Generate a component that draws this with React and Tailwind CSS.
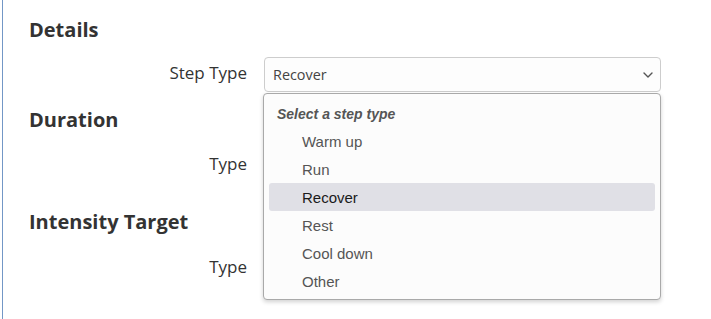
import { useState } from 'react'

const STEP_TYPES = ['Warm up', 'Run', 'Recover', 'Rest', 'Cool down', 'Other']

function Chevron() {
  return (
    <svg width="10" height="6" viewBox="0 0 10 6" className="absolute right-[7px] top-1/2 -translate-y-1/2">
      <path d="M1 1l4 4 4-4" fill="none" stroke="#555" strokeWidth="1.4" strokeLinecap="round" strokeLinejoin="round" />
    </svg>
  )
}

function SelectBox({ value, children }) {
  return (
    <div className="relative w-[397px]">
      <div className="relative h-[35px] rounded-[4px] border border-[#cdcdcd] bg-[#fdfdfd] pl-[8px] flex items-center text-[14.4px] leading-5 text-[#444]">
        {value}
        <Chevron />
      </div>
      {children}
    </div>
  )
}

function Row({ label, value, className = '', children }) {
  return (
    <div className={`flex items-start ${className}`}>
      <div className="w-[218px] text-right text-[17px] leading-6 text-[#333] mt-[4px]">{label}</div>
      <div className="ml-[17px]">
        <SelectBox value={value}>{children}</SelectBox>
      </div>
    </div>
  )
}

function Heading({ children, className = '' }) {
  return <h2 className={`text-[20px] leading-7 font-bold text-[#333] ${className}`}>{children}</h2>
}

function StepMenu({ selected }) {
  return (
    <div className="absolute left-[-1px] right-0 top-[calc(100%+1px)] z-10 rounded-[4px] border border-[#a9a9a9] bg-[#fcfcfc] pt-[5px] pb-[4px] px-[5px] shadow-[0_2px_4px_rgba(0,0,0,0.18)] font-['Liberation_Sans',Arial,sans-serif]">
      <div className="h-7 leading-7 pt-[1px] pl-[8px] text-[14px] font-bold italic text-[#555]">Select a step type</div>
      {STEP_TYPES.map(t => (
        <div
          key={t}
          className={`h-7 leading-7 pt-[1px] pl-[33px] text-[15px] rounded-[3px] ${t === selected ? 'bg-[#e0e0e6] text-[#1a1a1a]' : 'text-[#555]'}`}
        >
          {t}
        </div>
      ))}
    </div>
  )
}

export default function App() {
  const [stepType] = useState('Recover')

  return (
    <div className="min-h-[319px] w-[711px] bg-white font-['Open_Sans',sans-serif] overflow-hidden">
      <div className="ml-[2px] border-l border-[#7397c6] min-h-[319px] pl-[26px] pt-[16px]">
        <Heading>Details</Heading>
        <Row label="Step Type" value={stepType} className="mt-[13px]">
          <StepMenu selected={stepType} />
        </Row>

        <Heading className="mt-[14px]">Duration</Heading>
        <Row label="Type" value="" className="mt-[14px]" />

        <Heading className="mt-[25px]">Intensity Target</Heading>
        <Row label="Type" value="" className="mt-[15px]" />
      </div>
    </div>
  )
}
